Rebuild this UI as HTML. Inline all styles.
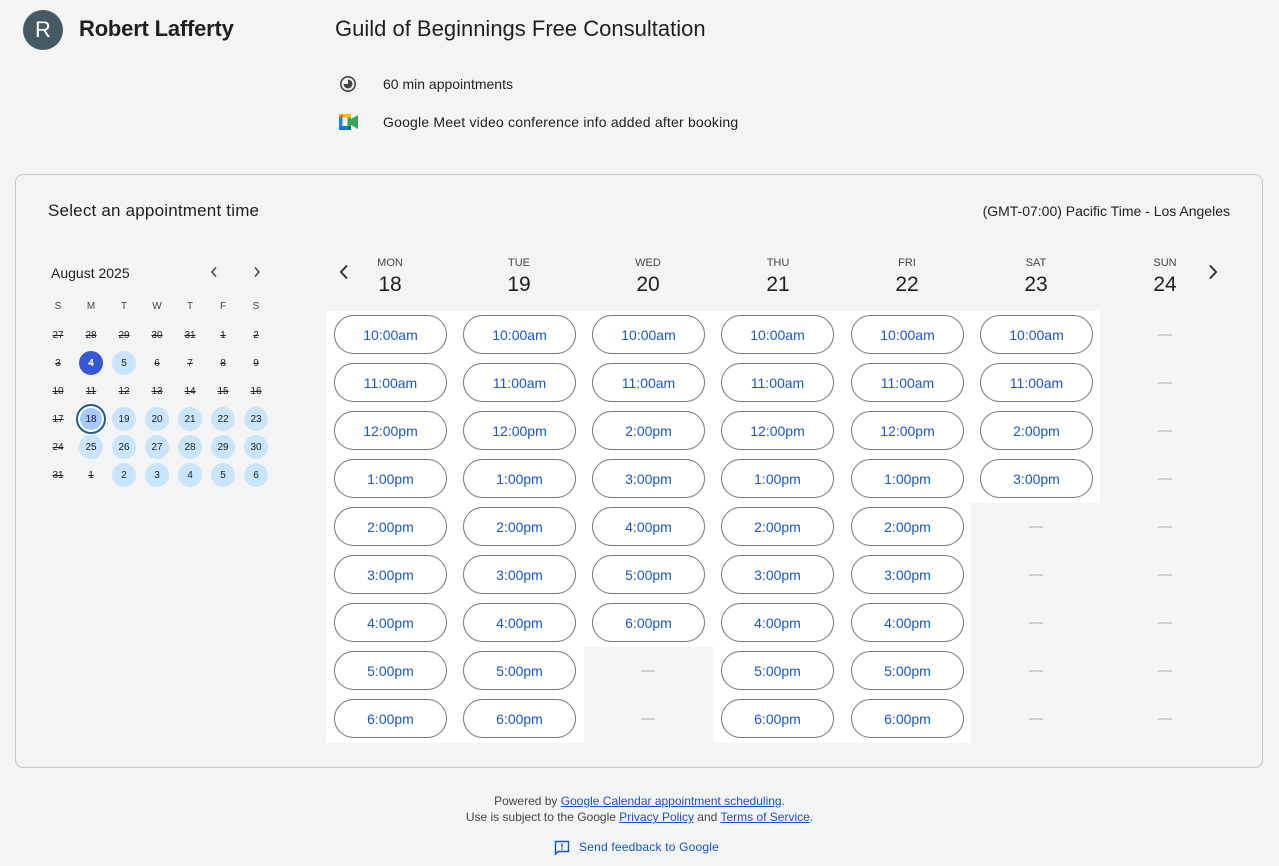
<!DOCTYPE html><html><head><meta charset="utf-8"><style>
body{margin:0;background:#f4f4f4;font-family:"Liberation Sans",sans-serif;color:#1f1f1f;width:1279px;height:866px;position:relative;overflow:hidden}
.a{position:absolute}
.b{position:absolute;width:111px;height:37px;border:1px solid #747775;border-radius:20px;background:#fff;color:#1a55d6;font-size:14px;line-height:39px;text-align:center}
.d{position:absolute;width:14px;height:2px;background:#d0d0d0}
.w{position:absolute;background:#fff}
.dh{position:absolute;width:80px;text-align:center;font-size:11px;color:#444}
.dn{position:absolute;width:80px;text-align:center;font-size:21px;color:#1f1f1f}
.c{position:absolute;width:24px;height:24px;line-height:25px;text-align:center;font-size:10px;color:#1f1f1f;border-radius:50%}
.s{text-decoration:line-through}
.av{background:#c9e4fd}
.h{position:absolute;width:24px;text-align:center;font-size:10px;color:#444}
a{color:#0b57d0}
</style></head><body>
<div class="a" style="left:23px;top:10px;width:40px;height:40px;border-radius:50%;background:#455a64;color:#fff;font-size:22px;line-height:40px;text-align:center">R</div>
<div class="a" style="left:79px;top:16px;font-size:22px;font-weight:bold;color:#1f1f1f;letter-spacing:-0.2px">Robert Lafferty</div>
<div class="a" style="left:335px;top:16px;font-size:22px;color:#1f1f1f">Guild of Beginnings Free Consultation</div>
<svg class="a" style="left:339px;top:75px" width="18" height="18" viewBox="0 0 18 18"><circle cx="9" cy="9" r="7.2" fill="none" stroke="#444" stroke-width="1.6"/><path d="M9 4.5A4.5 4.5 0 1 1 4.5 9H9Z" fill="#444"/></svg>
<div class="a" style="left:383px;top:76px;font-size:14px">60 min appointments</div>
<svg class="a" style="left:339px;top:114px" width="20" height="16" viewBox="0 0 20 16"><rect x="0" y="3" width="3.5" height="10" fill="#1e88e5"/><rect x="0" y="0" width="12" height="3.5" fill="#fbbc04"/><path d="M0 3.5L3.5 0V3.5Z" fill="#ea4335"/><rect x="0" y="12" width="12" height="4" fill="#1a73e8"/><rect x="8.5" y="0" width="3.5" height="16" fill="#34a853"/><path d="M12 5L19 1V15L12 11Z" fill="#34a853"/><rect x="8.5" y="0" width="3.5" height="3.5" fill="#fbbc04"/><rect x="8.5" y="12" width="3.5" height="4" fill="#188038"/></svg>
<div class="a" style="left:383px;top:114px;font-size:14px;letter-spacing:0.2px">Google Meet video conference info added after booking</div>

<div class="a" style="left:15px;top:174px;width:1246px;height:592px;border:1px solid #c7c7c7;border-radius:8px"></div>
<div class="a" style="left:48px;top:201px;font-size:17px;letter-spacing:0.2px">Select an appointment time</div>
<div class="a" style="right:49px;top:203px;font-size:14px">(GMT-07:00) Pacific Time - Los Angeles</div>

<div class="a" style="left:51px;top:265px;font-size:14px">August 2025</div>
<svg class="a" style="left:209px;top:266px" width="10" height="12" viewBox="0 0 10 12"><path d="M7 1.5L3 6L7 10.5" fill="none" stroke="#444" stroke-width="1.5"/></svg>
<svg class="a" style="left:252px;top:266px" width="10" height="12" viewBox="0 0 10 12"><path d="M3 1.5L7 6L3 10.5" fill="none" stroke="#444" stroke-width="1.5"/></svg>
<div class="h" style="left:46px;top:301px">S</div><div class="h" style="left:79px;top:301px">M</div><div class="h" style="left:112px;top:301px">T</div><div class="h" style="left:145px;top:301px">W</div><div class="h" style="left:178px;top:301px">T</div><div class="h" style="left:211px;top:301px">F</div><div class="h" style="left:244px;top:301px">S</div>
<div class="c s" style="left:46px;top:323px">27</div><div class="c s" style="left:79px;top:323px">28</div><div class="c s" style="left:112px;top:323px">29</div><div class="c s" style="left:145px;top:323px">30</div><div class="c s" style="left:178px;top:323px">31</div><div class="c s" style="left:211px;top:323px">1</div><div class="c s" style="left:244px;top:323px">2</div>
<div class="c s" style="left:46px;top:351px">3</div><div class="c s" style="left:79px;top:351px;background:#3457d5;color:#fff;font-weight:bold">4</div><div class="c av" style="left:112px;top:351px">5</div><div class="c s" style="left:145px;top:351px">6</div><div class="c s" style="left:178px;top:351px">7</div><div class="c s" style="left:211px;top:351px">8</div><div class="c s" style="left:244px;top:351px">9</div>
<div class="c s" style="left:46px;top:379px">10</div><div class="c s" style="left:79px;top:379px">11</div><div class="c s" style="left:112px;top:379px">12</div><div class="c s" style="left:145px;top:379px">13</div><div class="c s" style="left:178px;top:379px">14</div><div class="c s" style="left:211px;top:379px">15</div><div class="c s" style="left:244px;top:379px">16</div>
<div class="c s" style="left:46px;top:407px">17</div><div class="c" style="left:76px;top:404px;width:26px;height:26px;line-height:27px;background:#a8c7fa;border:2px solid #1f5c8f;box-shadow:inset 0 0 0 2px #fff">18</div><div class="c av" style="left:112px;top:407px">19</div><div class="c av" style="left:145px;top:407px">20</div><div class="c av" style="left:178px;top:407px">21</div><div class="c av" style="left:211px;top:407px">22</div><div class="c av" style="left:244px;top:407px">23</div>
<div class="c s" style="left:46px;top:435px">24</div><div class="c av" style="left:79px;top:435px">25</div><div class="c av" style="left:112px;top:435px">26</div><div class="c av" style="left:145px;top:435px">27</div><div class="c av" style="left:178px;top:435px">28</div><div class="c av" style="left:211px;top:435px">29</div><div class="c av" style="left:244px;top:435px">30</div>
<div class="c s" style="left:46px;top:463px">31</div><div class="c s" style="left:79px;top:463px">1</div><div class="c av" style="left:112px;top:463px">2</div><div class="c av" style="left:145px;top:463px">3</div><div class="c av" style="left:178px;top:463px">4</div><div class="c av" style="left:211px;top:463px">5</div><div class="c av" style="left:244px;top:463px">6</div>

<svg class="a" style="left:337px;top:263px" width="14" height="18" viewBox="0 0 14 18"><path d="M10 2.5L4 9L10 15.5" fill="none" stroke="#333" stroke-width="2"/></svg>
<svg class="a" style="left:1206px;top:263px" width="14" height="18" viewBox="0 0 14 18"><path d="M4 2.5L10 9L4 15.5" fill="none" stroke="#333" stroke-width="2"/></svg>
<div class="dh" style="left:350px;top:257px">MON</div><div class="dn" style="left:350px;top:273px">18</div>
<div class="dh" style="left:479px;top:257px">TUE</div><div class="dn" style="left:479px;top:273px">19</div>
<div class="dh" style="left:608px;top:257px">WED</div><div class="dn" style="left:608px;top:273px">20</div>
<div class="dh" style="left:738px;top:257px">THU</div><div class="dn" style="left:738px;top:273px">21</div>
<div class="dh" style="left:867px;top:257px">FRI</div><div class="dn" style="left:867px;top:273px">22</div>
<div class="dh" style="left:996px;top:257px">SAT</div><div class="dn" style="left:996px;top:273px">23</div>
<div class="dh" style="left:1125px;top:257px">SUN</div><div class="dn" style="left:1125px;top:273px">24</div>

<div class="w" style="left:326px;top:311px;width:258px;height:432px"></div>
<div class="w" style="left:584px;top:311px;width:129px;height:336px"></div>
<div class="w" style="left:713px;top:311px;width:258px;height:432px"></div>
<div class="w" style="left:971px;top:311px;width:129px;height:192px"></div>

<div class="b" style="left:334px;top:315px">10:00am</div><div class="b" style="left:334px;top:363px">11:00am</div><div class="b" style="left:334px;top:411px">12:00pm</div><div class="b" style="left:334px;top:459px">1:00pm</div><div class="b" style="left:334px;top:507px">2:00pm</div><div class="b" style="left:334px;top:555px">3:00pm</div><div class="b" style="left:334px;top:603px">4:00pm</div><div class="b" style="left:334px;top:651px">5:00pm</div><div class="b" style="left:334px;top:699px">6:00pm</div>
<div class="b" style="left:463px;top:315px">10:00am</div><div class="b" style="left:463px;top:363px">11:00am</div><div class="b" style="left:463px;top:411px">12:00pm</div><div class="b" style="left:463px;top:459px">1:00pm</div><div class="b" style="left:463px;top:507px">2:00pm</div><div class="b" style="left:463px;top:555px">3:00pm</div><div class="b" style="left:463px;top:603px">4:00pm</div><div class="b" style="left:463px;top:651px">5:00pm</div><div class="b" style="left:463px;top:699px">6:00pm</div>
<div class="b" style="left:592px;top:315px">10:00am</div><div class="b" style="left:592px;top:363px">11:00am</div><div class="b" style="left:592px;top:411px">2:00pm</div><div class="b" style="left:592px;top:459px">3:00pm</div><div class="b" style="left:592px;top:507px">4:00pm</div><div class="b" style="left:592px;top:555px">5:00pm</div><div class="b" style="left:592px;top:603px">6:00pm</div>
<div class="d" style="left:641px;top:670px"></div><div class="d" style="left:641px;top:718px"></div>
<div class="b" style="left:721px;top:315px">10:00am</div><div class="b" style="left:721px;top:363px">11:00am</div><div class="b" style="left:721px;top:411px">12:00pm</div><div class="b" style="left:721px;top:459px">1:00pm</div><div class="b" style="left:721px;top:507px">2:00pm</div><div class="b" style="left:721px;top:555px">3:00pm</div><div class="b" style="left:721px;top:603px">4:00pm</div><div class="b" style="left:721px;top:651px">5:00pm</div><div class="b" style="left:721px;top:699px">6:00pm</div>
<div class="b" style="left:851px;top:315px">10:00am</div><div class="b" style="left:851px;top:363px">11:00am</div><div class="b" style="left:851px;top:411px">12:00pm</div><div class="b" style="left:851px;top:459px">1:00pm</div><div class="b" style="left:851px;top:507px">2:00pm</div><div class="b" style="left:851px;top:555px">3:00pm</div><div class="b" style="left:851px;top:603px">4:00pm</div><div class="b" style="left:851px;top:651px">5:00pm</div><div class="b" style="left:851px;top:699px">6:00pm</div>
<div class="b" style="left:980px;top:315px">10:00am</div><div class="b" style="left:980px;top:363px">11:00am</div><div class="b" style="left:980px;top:411px">2:00pm</div><div class="b" style="left:980px;top:459px">3:00pm</div>
<div class="d" style="left:1029px;top:526px"></div><div class="d" style="left:1029px;top:574px"></div><div class="d" style="left:1029px;top:622px"></div><div class="d" style="left:1029px;top:670px"></div><div class="d" style="left:1029px;top:718px"></div>
<div class="d" style="left:1158px;top:334px"></div><div class="d" style="left:1158px;top:382px"></div><div class="d" style="left:1158px;top:430px"></div><div class="d" style="left:1158px;top:478px"></div><div class="d" style="left:1158px;top:526px"></div><div class="d" style="left:1158px;top:574px"></div><div class="d" style="left:1158px;top:622px"></div><div class="d" style="left:1158px;top:670px"></div><div class="d" style="left:1158px;top:718px"></div>

<div class="a" style="left:0;width:1279px;top:793px;text-align:center;font-size:12px;color:#444;line-height:16px">Powered by <a href="#">Google Calendar appointment scheduling</a>.<br>Use is subject to the Google <a href="#">Privacy Policy</a> and <a href="#">Terms of Service</a>.</div>
<svg class="a" style="left:554px;top:840px" width="16" height="16" viewBox="0 0 16 16"><path d="M1.5 1.5H14.5V11.5H4L1.5 14Z" fill="none" stroke="#0b57d0" stroke-width="1.4"/><rect x="7.3" y="3.5" width="1.4" height="4" fill="#0b57d0"/><rect x="7.3" y="8.5" width="1.4" height="1.4" fill="#0b57d0"/></svg>
<div class="a" style="left:579px;top:840px;font-size:12px;color:#0b57d0;letter-spacing:0.2px">Send feedback to Google</div>
</body></html>
